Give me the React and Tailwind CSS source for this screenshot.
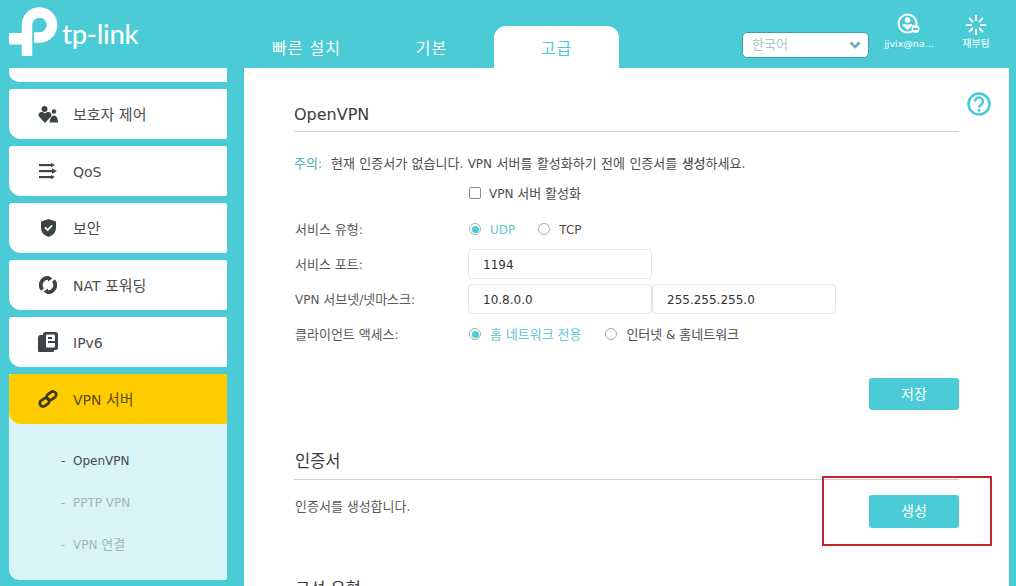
const font = { fontFamily: '"DejaVu Sans", "Noto Sans CJK KR", sans-serif' };

// Hangul runs are set a little larger than the Latin runs around them
function T({ children, k = "text-[13px]" }) {
  const parts = String(children).split(/([가-힣]+)/);
  return (
    <>
      {parts.map((p, i) => (i % 2 ? <span key={i} className={k}>{p}</span> : p))}
    </>
  );
}

function Logo() {
  return (
    <div className="flex items-start w-[244px] pl-[9px] pt-[7px]">
      <svg width="50" height="50" viewBox="0 0 50 50" className="shrink-0">
        <path d="M18 49V18A12.500 12.500 0 1 1 30 30.500H25" fill="none" stroke="#fff" strokeWidth="10.500" strokeLinejoin="round" />
        <rect x="0" y="26" width="23" height="11.500" rx="1" fill="#fff" />
      </svg>
      <span className="ml-[3px] mt-[10px] text-[27.500px] leading-[34px] font-medium text-white tracking-[-0.3px] [font-family:Lato,sans-serif]">tp-link</span>
    </div>
  );
}

function Tabs() {
  return (
    <div className="flex self-end h-[42px] text-[16px] tracking-[1px]">
      <div className="w-[125px] pt-[4px] flex items-center justify-center text-white">빠른 설치</div>
      <div className="w-[125px] pt-[4px] flex items-center justify-center text-white">기본</div>
      <div className="w-[125px] pt-[4px] flex items-center justify-center bg-white text-[#4acbd6] rounded-t-[12px]">고급</div>
    </div>
  );
}

function Account() {
  return (
    <div className="w-[64px] flex flex-col items-center text-white text-[9.500px] leading-[12px]">
      <svg width="24" height="21" viewBox="0 0 24 21" className="mb-[4px]">
        <circle cx="10.500" cy="10.500" r="9" fill="none" stroke="#fff" strokeWidth="2" />
        <circle cx="10.500" cy="7" r="2.800" fill="#fff" />
        <path d="M5 12c2-1.500 3.500-1.500 5.500 0c2-1.500 3.500-1.500 5.500 0l-5.500 5z" fill="#fff" />
        <circle cx="18.500" cy="16" r="4" fill="#fff" />
        <rect x="16" y="15" width="5" height="2" fill="#4acbd6" />
      </svg>
      <span>jjvix@na...</span>
    </div>
  );
}

function Reboot() {
  const rays = ["M10 0v6", "M10 14v6", "M0 10h6", "M14 10h6", "M3 3l4 4", "M13 13l4 4", "M17 3l-4 4", "M7 13l-4 4"];
  return (
    <div className="ml-[10px] w-[50px] flex flex-col items-center text-white text-[10px] leading-[12px]">
      <svg width="20" height="20" viewBox="0 0 20 20" className="mt-[2px] mb-[3px]">
        {rays.map((d) => <path key={d} d={d} stroke="#fff" strokeWidth="2" fill="none" />)}
      </svg>
      <span>재부팅</span>
    </div>
  );
}

function Header() {
  return (
    <header className="h-[68px] flex shrink-0">
      <Logo />
      <Tabs />
      <div className="ml-[123px] mt-[32px] w-[127px] h-[26px] bg-white rounded-[5px] border border-[#3b9fb0] flex items-center justify-between pl-[9px] pr-[7px] text-[#a9c4cc] text-[13px]">
        <span>한국어</span>
        <svg width="12" height="8" viewBox="0 0 12 8"><path d="M1.500 1.500L6 6l4.500-4.500" fill="none" stroke="#6fa8bd" strokeWidth="2.500" /></svg>
      </div>
      <div className="ml-[8px] pt-[13px] flex">
        <Account />
        <Reboot />
      </div>
    </header>
  );
}

const ic = "#3d4448";
const icons = {
  family: (
    <svg width="20" height="17" viewBox="0 0 20 17" fill={ic}>
      <circle cx="6.500" cy="3" r="3" />
      <circle cx="16" cy="5.500" r="2.200" />
      <path d="M7 17L1 10.500C-1 7 3.500 4 7 7.500C10.500 4 15 7 13 10.500z" />
      <path d="M11.500 16.500c.5-4 2-7 4.500-7s4 3 4 7z" />
    </svg>
  ),
  qos: (
    <svg width="18" height="16" viewBox="0 0 18 16" fill={ic}>
      <rect x="0" y="1" width="13" height="2.200" /><rect x="0" y="7" width="14" height="2.200" /><rect x="0" y="13" width="13" height="2.200" />
      <path d="M12 0l4 2.100l-4 2.100zM13 5.500l5 2.600l-5 2.600zM12 12l4 2.100l-4 2.100z" />
    </svg>
  ),
  shield: (
    <svg width="15" height="18" viewBox="0 0 15 18">
      <path d="M7.500 0L15 2.500V9c0 4.500-3.500 7.500-7.500 9C3.500 16.500 0 13.500 0 9V2.500z" fill={ic} />
      <path d="M4 8.500l2.700 2.500L11 6.500" fill="none" stroke="#fff" strokeWidth="1.800" />
    </svg>
  ),
  nat: (
    <svg width="18" height="18" viewBox="0 0 18 18">
      <path d="M3.500 13.500A7 7 0 0 1 9.500 2" fill="none" stroke={ic} strokeWidth="3.800" />
      <path d="M14.500 4.500A7 7 0 0 1 8.500 16" fill="none" stroke={ic} strokeWidth="3.800" />
      <path d="M9 -0.500l4.500 3l-4.500 3zM9 18.500l-4.500-3l4.500-3z" fill={ic} />
    </svg>
  ),
  doc: (
    <svg width="20" height="20" viewBox="0 0 20 20">
      <path d="M3 3h3v14h10v2a1 1 0 0 1-1 1H1a1 1 0 0 1-1-1V6a3 3 0 0 1 3-3z" fill={ic} />
      <rect x="5" y="0" width="15" height="18" rx="2.500" fill={ic} />
      <rect x="8" y="2.500" width="9" height="13" rx="1" fill="#fff" />
      <rect x="10" y="5" width="4" height="2" fill={ic} /><rect x="10" y="9" width="7" height="2" fill={ic} />
    </svg>
  ),
  link: (
    <svg width="20" height="18" viewBox="0 0 20 18" fill="none" stroke="#3f3a14" strokeWidth="2.800">
      <rect x="1.500" y="9" width="10" height="6.500" rx="3.250" transform="rotate(-35 6.500 12.250)" />
      <rect x="8.500" y="2.500" width="10" height="6.500" rx="3.250" transform="rotate(-35 13.500 5.750)" />
    </svg>
  ),
};

function NavItem({ icon, label, active }) {
  return (
    <div className={`h-[50px] flex items-center rounded-bl-[12px] rounded-tl-[3px] rounded-r-[2px] text-[14px] ${active ? "bg-[#ffcc00] text-[#5a4d10]" : "bg-white text-[#4d4d4d]"}`}>
      <div className="ml-[19px] mr-[5px] w-[40px] flex justify-center">{icons[icon]}</div>
      <span className="pt-[2px]"><T k="text-[15px]">{label}</T></span>
    </div>
  );
}

function Sidebar() {
  const sub = [["OpenVPN", "text-[#3f4a4d]"], ["PPTP VPN", "text-[#a0b6ba]"], ["VPN 연결", "text-[#a0b6ba]"]];
  return (
    <aside className="w-[218px] ml-[9px] mr-[17px] shrink-0 flex flex-col gap-[7px]">
      <div className="h-[14px] bg-white rounded-bl-[10px]" />
      <NavItem icon="family" label="보호자 제어" />
      <NavItem icon="qos" label="QoS" />
      <NavItem icon="shield" label="보안" />
      <NavItem icon="nat" label="NAT 포워딩" />
      <NavItem icon="doc" label="IPv6" />
      <div className="flex flex-col bg-[#d9f4f7] rounded-bl-[10px] rounded-r-[2px] h-[206px]">
        <NavItem icon="link" label="VPN 서버" active />
        <div className="pt-[26px] flex flex-col gap-[20px] text-[12px]">
          {sub.map(([t, c]) => (
            <div key={t} className={`h-[22px] flex items-center pl-[52px] ${c}`}>
              <span className="w-[12px]">-</span><span><T>{t}</T></span>
            </div>
          ))}
        </div>
      </div>
    </aside>
  );
}

function Radio({ on, label }) {
  return (
    <label className={`flex items-center gap-[9px] ${on ? "text-[#63c6d2]" : "text-[#4d4d4d]"}`}>
      <span className="w-[12px] h-[12px] rounded-full border border-[#a8a8a8] flex items-center justify-center">
        {on && <span className="w-[7px] h-[7px] rounded-full bg-[#4acbd6]" />}
      </span>
      <span className="pt-[1px]"><T>{label}</T></span>
    </label>
  );
}

function Row({ label, children, className }) {
  return (
    <div className={`flex items-center ${className}`}>
      <div className="w-[174px] shrink-0 pl-[1px] pt-[1px] text-[#5a5a5a]"><T>{label}</T></div>
      {children}
    </div>
  );
}

const Field = ({ value }) => (
  <div className="w-[184px] h-[30px] border border-[#e6e6e6] rounded-[4px] flex items-center pl-[14px] pt-[1px] text-[#333]">{value}</div>
);

const Heading = ({ children, className }) => (
  <h2 className={`h-[30px] pb-[5px] border-b border-[#cfcfcf] text-[16px] leading-[24px] text-[#3c3c3c] ${className}`}>
    <T k="text-[16.500px]">{children}</T>
  </h2>
);

const Btn = ({ children, className }) => (
  <button className={`w-[90px] bg-[#4acbd6] text-white rounded-[3px] text-[14px] ${className}`}>{children}</button>
);

function Main() {
  return (
    <main className="relative flex-1 bg-white overflow-hidden px-[50px] pt-[34px] text-[12px] mr-[7px]">
      <svg width="24" height="24" viewBox="0 0 24 24" className="absolute right-[18px] top-[24px]">
        <circle cx="12" cy="12" r="10.500" fill="none" stroke="#4acbd6" strokeWidth="2.600" />
        <path d="M8 9.500a4 4 0 1 1 6.500 3c-1.500 1-2.500 1.500-2.500 3" fill="none" stroke="#4acbd6" strokeWidth="2.400" />
        <circle cx="12" cy="18.200" r="1.500" fill="#4acbd6" />
      </svg>
      <Heading className="pt-[1px]">OpenVPN</Heading>
      <p className="mt-[22px] h-[19px] leading-[19px] text-[#4d4d4d] [word-spacing:0.6px]">
        <span className="text-[#3fa9b5] mr-[9px]"><T>주의:</T></span>
        <T>현재 인증서가 없습니다. VPN 서버를 활성화하기 전에 인증서를</T>{" "}
        <b className="font-medium"><T>생성</T></b><T>하세요.</T>
      </p>
      <div className="mt-[10px] h-[20px] pl-[175px] flex items-center gap-[8px] text-[#4d4d4d]">
        <span className="w-[12px] h-[12px] border border-[#8a8a8a] rounded-[2px]" />
        <span className="pt-[1px]"><T>VPN 서버 활성화</T></span>
      </div>
      <Row label="서비스 유형:" className="mt-[16px] h-[20px]">
        <div className="flex gap-[23px] pl-[1px]"><Radio on label="UDP" /><Radio label="TCP" /></div>
      </Row>
      <Row label="서비스 포트:" className="mt-[10px]"><Field value="1194" /></Row>
      <Row label="VPN 서브넷/넷마스크:" className="mt-[5px]"><Field value="10.8.0.0" /><Field value="255.255.255.0" /></Row>
      <Row label="클라이언트 액세스:" className="mt-[10px] h-[20px]">
        <div className="flex gap-[24px] pl-[1px]"><Radio on label="홈 네트워크 전용" /><Radio label="인터넷 & 홈네트워크" /></div>
      </Row>
      <div className="mt-[34px] flex justify-end"><Btn className="h-[32px]">저장</Btn></div>
      <Heading className="mt-[40px] pl-[1px]">인증서</Heading>
      <div className="mt-[15px] flex items-center justify-between">
        <span className="pl-[1px] mb-[10px] text-[#5a5a5a]"><T>인증서를 생성합니다.</T></span>
        <Btn className="h-[33px]">생성</Btn>
      </div>
      <Heading className="mt-[50px] pl-[1px]">구성 유형</Heading>
    </main>
  );
}

export default function App() {
  return (
    <div style={font} className="relative w-[1016px] h-[586px] overflow-hidden bg-[#4acbd6] flex flex-col">
      <Header />
      <div className="flex flex-1 min-h-0">
        <Sidebar />
        <Main />
      </div>
      <div className="absolute left-[822px] top-[476px] w-[170px] h-[70px] border-2 border-[#c4262e]" />
    </div>
  );
}
